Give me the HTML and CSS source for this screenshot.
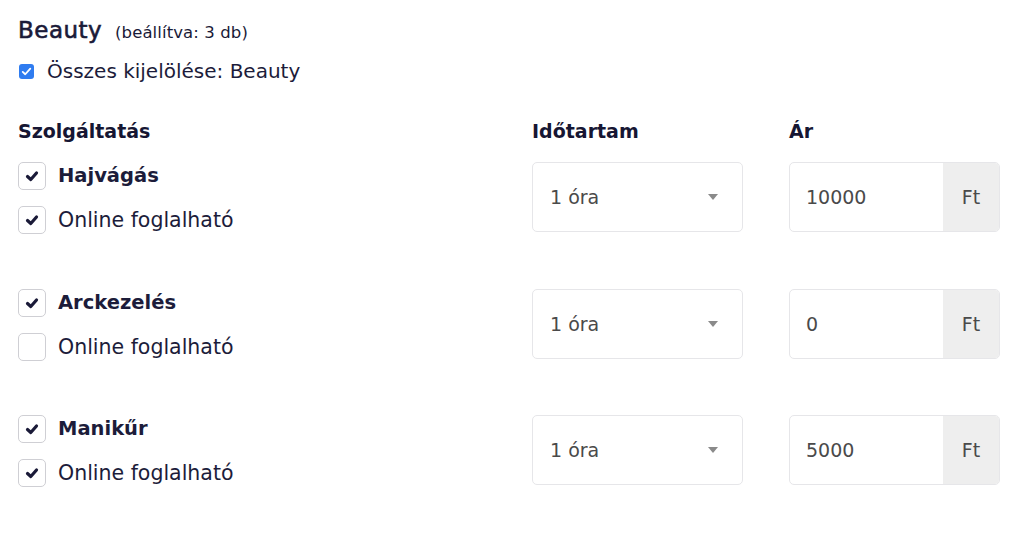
FILE: index.html
```html
<!DOCTYPE html>
<html lang="hu">
<head>
  <meta charset="UTF-8" />
  <title>Beauty szolgáltatások</title>
  <link rel="stylesheet" href="styles.css">
</head>
<body>
  <div class="panel">
    <h2 class="group-title">Beauty <small>(beállítva: 3 db)</small></h2>

    <label class="select-all">
      <span class="tick-blue">
        <svg viewBox="0 0 16 16" width="11" height="11"><path d="M2.5 8.5 L6.2 12 L13.5 3.8" fill="none" stroke="#fff" stroke-width="2.6" stroke-linecap="round" stroke-linejoin="round"/></svg>
      </span>
      Összes kijelölése: Beauty
    </label>

    <div class="grid head">
      <div>Szolgáltatás</div>
      <div>Időtartam</div>
      <div>Ár</div>
    </div>

    <div class="grid service">
      <div class="checks">
        <label class="check"><span class="box on"><svg viewBox="0 0 16 16"><path d="M3.5 8.5 L6.8 11.5 L12.5 5" /></svg></span><b>Hajvágás</b></label>
        <label class="check"><span class="box on"><svg viewBox="0 0 16 16"><path d="M3.5 8.5 L6.8 11.5 L12.5 5" /></svg></span>Online foglalható</label>
      </div>
      <div class="select">1 óra <span class="caret"></span></div>
      <div class="price"><span class="value">10000</span><span class="unit">Ft</span></div>
    </div>

    <div class="grid service">
      <div class="checks">
        <label class="check"><span class="box on"><svg viewBox="0 0 16 16"><path d="M3.5 8.5 L6.8 11.5 L12.5 5" /></svg></span><b>Arckezelés</b></label>
        <label class="check"><span class="box"></span>Online foglalható</label>
      </div>
      <div class="select">1 óra <span class="caret"></span></div>
      <div class="price"><span class="value">0</span><span class="unit">Ft</span></div>
    </div>

    <div class="grid service">
      <div class="checks">
        <label class="check"><span class="box on"><svg viewBox="0 0 16 16"><path d="M3.5 8.5 L6.8 11.5 L12.5 5" /></svg></span><b>Manikűr</b></label>
        <label class="check"><span class="box on"><svg viewBox="0 0 16 16"><path d="M3.5 8.5 L6.8 11.5 L12.5 5" /></svg></span>Online foglalható</label>
      </div>
      <div class="select">1 óra <span class="caret"></span></div>
      <div class="price"><span class="value">5000</span><span class="unit">Ft</span></div>
    </div>
  </div>
</body>
</html>
```

FILE: styles.css
```css
* {
  box-sizing: border-box;
}

body {
  margin: 0;
  background: #fff;
  color: #1c1c3a;
  font-family: 'DejaVu Sans', 'Noto Sans', sans-serif;
}

.panel {
  padding: 13px 24px 0 18px;
}

.group-title {
  margin: 0;
  font-size: 23px;
  font-weight: 400;
  letter-spacing: 0.5px;
  -webkit-text-stroke: 0.6px #1a1a38;
  line-height: 34px;
  color: #1a1a38;
}

.group-title small {
  margin-left: 5px;
  font-size: 16.5px;
  letter-spacing: 0.1px;
  -webkit-text-stroke: 0;
}

.select-all {
  display: flex;
  align-items: center;
  gap: 13px;
  margin-top: 7px;
  font-size: 20px;
  line-height: 28px;
  padding-left: 1px;
}

.tick-blue {
  width: 15px;
  height: 15px;
  border-radius: 3px;
  background: #2f7cf0;
  display: flex;
  align-items: center;
  justify-content: center;
}

.grid {
  display: grid;
  grid-template-columns: 1fr 211px 211px;
  column-gap: 46px;
}

.head {
  margin-top: 33px;
  font-size: 19px;
  font-weight: 700;
  line-height: 26px;
  color: #161633;
}

.service {
  margin-top: 18px;
  margin-bottom: 54.5px;
  align-items: start;
}

.checks {
  display: flex;
  flex-direction: column;
  gap: 16px;
}

.check {
  display: flex;
  align-items: center;
  gap: 12px;
  font-size: 20.5px;
  line-height: 28px;
}

.check b {
  font-size: 19.5px;
  font-weight: 700;
}

.box {
  width: 28px;
  height: 28px;
  border: 1px solid #cfcfd4;
  border-radius: 5px;
  display: flex;
  align-items: center;
  justify-content: center;
  background: #fff;
}

.box svg {
  width: 16px;
  height: 16px;
  fill: none;
  stroke: #1a1a38;
  stroke-width: 3.2;
  stroke-linecap: round;
  stroke-linejoin: round;
}

.select, .price {
  height: 70px;
  border: 1px solid #e6e6e9;
  border-radius: 5px;
  font-size: 19px;
  color: #4a4a4a;
}

.select {
  display: flex;
  align-items: center;
  justify-content: space-between;
  padding: 0 24px 0 17px;
}

.caret {
  width: 0;
  height: 0;
  border-left: 5px solid transparent;
  border-right: 5px solid transparent;
  border-top: 6px solid #8a8a8a;
}

.price {
  display: flex;
  overflow: hidden;
}

.price .value {
  flex: 1;
  display: flex;
  align-items: center;
  padding-left: 16px;
}

.price .unit {
  width: 56px;
  background: #eeeeee;
  display: flex;
  align-items: center;
  justify-content: center;
}
```
